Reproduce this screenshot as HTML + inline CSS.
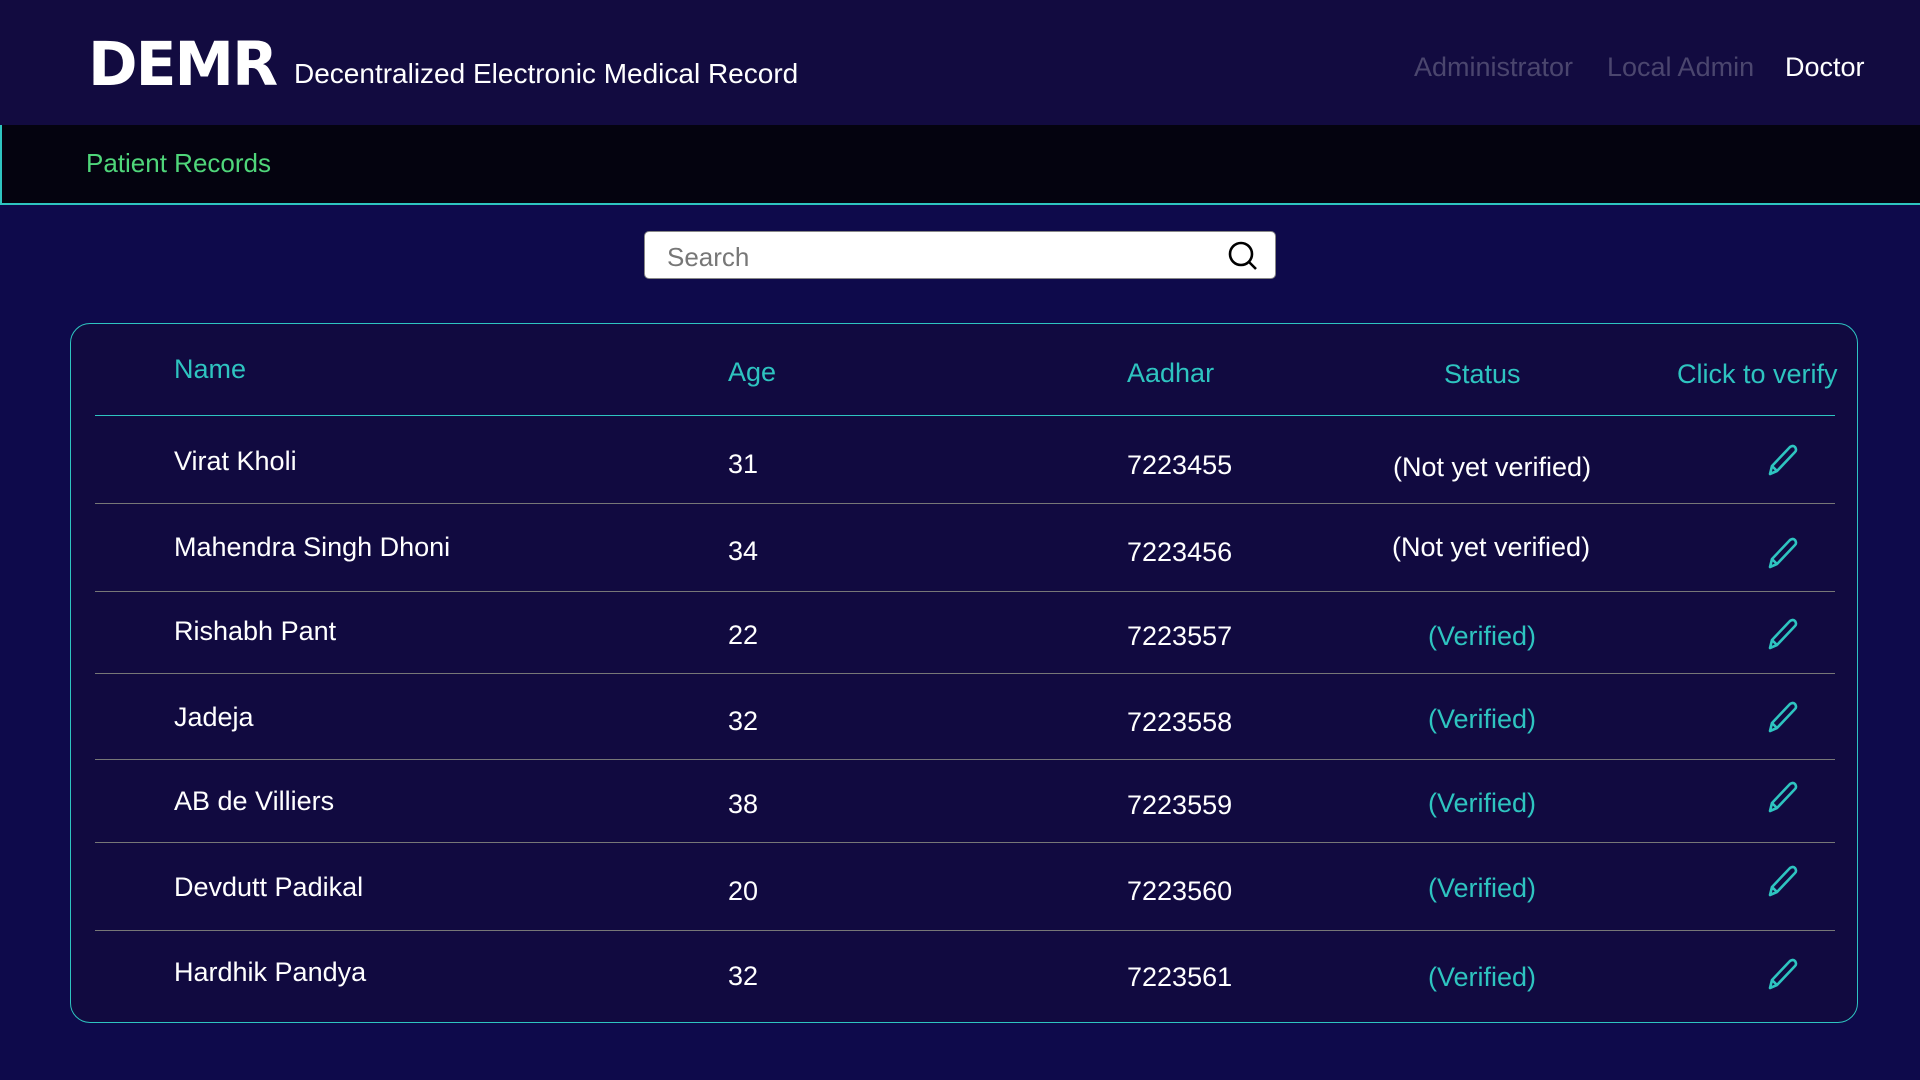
<!DOCTYPE html>
<html><head><meta charset="utf-8"><style>
*{margin:0;padding:0;box-sizing:border-box}
body{width:1920px;height:1080px;background:#0e0a4b;font-family:"Liberation Sans",sans-serif;position:relative;overflow:hidden;color:#fff}
.hdr{position:absolute;left:0;top:0;width:1920px;height:125px;background:#120b40}
.logo{position:absolute;left:88px;top:34px;font-size:61px;line-height:61px;font-weight:900;letter-spacing:-2px;color:#fff;transform:scaleX(0.98);transform-origin:left;font-family:"DejaVu Sans",sans-serif}
.sub{position:absolute;left:294px;top:58px;font-size:28px;color:#fff}
.nav{position:absolute;top:52px;font-size:27px}
.bar{position:absolute;left:0;top:125px;width:1920px;height:80px;background:#04030f;border-left:2px solid #2ec4c0;border-bottom:2px solid #2ec4c0}
.pr{position:absolute;left:86px;top:148px;font-size:26px;color:#4fd67a}
.search{position:absolute;left:644px;top:231px;width:632px;height:48px;background:#fff;border-radius:5px;border:1px solid #888}
.search span{position:absolute;left:22px;top:10px;font-size:26px;color:#777}
.card{position:absolute;left:70px;top:323px;width:1788px;height:700px;background:#110a40;border:1.5px solid #2ec4c0;border-radius:20px}
.t{position:absolute;font-size:27px;white-space:nowrap}
.h{color:#2ec4c0}
.line{position:absolute;left:95px;width:1740px;height:1px;background:#777}
.v{color:#2ec4c0}
</style></head><body>
<div class="hdr">
<div class="logo">DEMR</div>
<div class="sub">Decentralized Electronic Medical Record</div>
<div class="nav" style="left:1414px;color:#4b466e">Administrator</div>
<div class="nav" style="left:1607px;color:#4b466e">Local Admin</div>
<div class="nav" style="left:1785px;color:#fff">Doctor</div>
</div>
<div class="bar"></div>
<div class="pr">Patient Records</div>
<div class="search"><span>Search</span>
<svg style="position:absolute;right:16px;top:8px" width="32" height="32" viewBox="0 0 32 32"><circle cx="14" cy="14" r="11" fill="none" stroke="#000" stroke-width="2.6"/><line x1="22" y1="22" x2="29" y2="29" stroke="#000" stroke-width="2.6"/></svg></div>
<div class="card"></div>
<div class="t h" style="left:174px;top:354px">Name</div>
<div class="t h" style="left:728px;top:357px">Age</div>
<div class="t h" style="left:1127px;top:358px">Aadhar</div>
<div class="t h" style="left:1444px;top:359px">Status</div>
<div class="t h" style="left:1677px;top:359px">Click to verify</div>
<div class="line" style="top:415px;background:#2ec4c0"></div>
<div class="line" style="top:503px"></div>
<div class="line" style="top:591px"></div>
<div class="line" style="top:673px"></div>
<div class="line" style="top:759px"></div>
<div class="line" style="top:842px"></div>
<div class="line" style="top:930px"></div>

<div class="t" style="left:174px;top:446px">Virat Kholi</div><div class="t" style="left:728px;top:449px">31</div><div class="t" style="left:1127px;top:450px">7223455</div><div class="t" style="left:1393px;top:452px">(Not yet verified)</div>
<div class="t" style="left:174px;top:532px">Mahendra Singh Dhoni</div><div class="t" style="left:728px;top:536px">34</div><div class="t" style="left:1127px;top:537px">7223456</div><div class="t" style="left:1392px;top:532px">(Not yet verified)</div>
<div class="t" style="left:174px;top:616px">Rishabh Pant</div><div class="t" style="left:728px;top:620px">22</div><div class="t" style="left:1127px;top:621px">7223557</div><div class="t v" style="left:1428px;top:621px">(Verified)</div>
<div class="t" style="left:174px;top:702px">Jadeja</div><div class="t" style="left:728px;top:706px">32</div><div class="t" style="left:1127px;top:707px">7223558</div><div class="t v" style="left:1428px;top:704px">(Verified)</div>
<div class="t" style="left:174px;top:786px">AB de Villiers</div><div class="t" style="left:728px;top:789px">38</div><div class="t" style="left:1127px;top:790px">7223559</div><div class="t v" style="left:1428px;top:788px">(Verified)</div>
<div class="t" style="left:174px;top:872px">Devdutt Padikal</div><div class="t" style="left:728px;top:876px">20</div><div class="t" style="left:1127px;top:876px">7223560</div><div class="t v" style="left:1428px;top:873px">(Verified)</div>
<div class="t" style="left:174px;top:957px">Hardhik Pandya</div><div class="t" style="left:728px;top:961px">32</div><div class="t" style="left:1127px;top:962px">7223561</div><div class="t v" style="left:1428px;top:962px">(Verified)</div>

<svg width="0" height="0" style="position:absolute"><defs><g id="pen"><path d="M4 31 L6 23 L24 4 Q27 2 29 4 Q31 7 29 9 L11 28 Z M6 23 L11 28" fill="none" stroke="#2ec4c0" stroke-width="2.6" stroke-linejoin="round"/></g></defs></svg>
<svg style="position:absolute;left:1766px;top:443px" width="34" height="34"><use href="#pen"/></svg>
<svg style="position:absolute;left:1766px;top:536px" width="34" height="34"><use href="#pen"/></svg>
<svg style="position:absolute;left:1766px;top:617px" width="34" height="34"><use href="#pen"/></svg>
<svg style="position:absolute;left:1766px;top:700px" width="34" height="34"><use href="#pen"/></svg>
<svg style="position:absolute;left:1766px;top:780px" width="34" height="34"><use href="#pen"/></svg>
<svg style="position:absolute;left:1766px;top:864px" width="34" height="34"><use href="#pen"/></svg>
<svg style="position:absolute;left:1766px;top:957px" width="34" height="34"><use href="#pen"/></svg>
</body></html>
